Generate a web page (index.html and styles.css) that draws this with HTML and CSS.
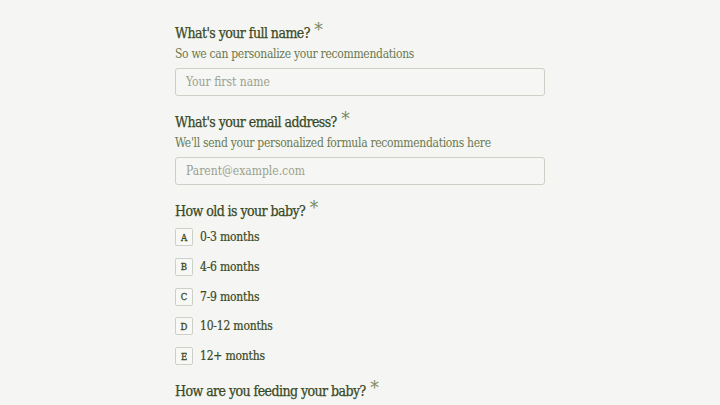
FILE: index.html
```html
<!DOCTYPE html>
<html lang="en">
<head>
<meta charset="utf-8">
<link rel="stylesheet" href="styles.css">
</head>
<body>
<form class="form">
  <div class="field">
    <label class="label">What's your full name? <span class="req">*</span></label>
    <p class="desc">So we can personalize your recommendations</p>
    <input class="input" type="text" placeholder="Your first name">
  </div>
  <div class="field">
    <label class="label">What's your email address? <span class="req">*</span></label>
    <p class="desc">We'll send your personalized formula recommendations here</p>
    <input class="input" type="email" placeholder="Parent@example.com">
  </div>
  <div class="field">
    <label class="label">How old is your baby? <span class="req">*</span></label>
    <ul class="options">
      <li class="option"><span class="key">A</span><span class="opt-text">0-3 months</span></li>
      <li class="option"><span class="key">B</span><span class="opt-text">4-6 months</span></li>
      <li class="option"><span class="key">C</span><span class="opt-text">7-9 months</span></li>
      <li class="option"><span class="key">D</span><span class="opt-text">10-12 months</span></li>
      <li class="option"><span class="key">E</span><span class="opt-text">12+ months</span></li>
    </ul>
  </div>
  <div class="field">
    <label class="label">How are you feeding your baby? <span class="req">*</span></label>
  </div>
</form>
</body>
</html>
```

FILE: styles.css
```css
html, body {
  margin: 0;
  padding: 0;
  background: #f5f5f3;
}
body {
  font-family: "DejaVu Serif Condensed", "DejaVu Serif", "Liberation Serif", serif;
  color: #3a4a1f;
}
.form {
  width: 370px;
  margin: 0 0 0 175px;
  padding-top: 20px;
  display: flex;
  flex-direction: column;
  gap: 13px;
}
.field {
  display: flex;
  flex-direction: column;
}
.label {
  font-size: 14px;
  line-height: 22px;
  height: 22px;
  letter-spacing: -0.55px;
  color: #3a4a1f;
  -webkit-text-stroke: 0.25px #3a4a1f;
}
.req {
  font-size: 19px;
  letter-spacing: 0;
  color: #7b8a5e;
  -webkit-text-stroke: 0;
  position: relative;
  top: -2px;
  margin-left: 1px;
}
.desc {
  margin: 2px 0 4px;
  font-size: 12px;
  line-height: 20px;
  letter-spacing: -0.3px;
  color: #6a7a50;
  white-space: nowrap;
}
.input {
  box-sizing: border-box;
  width: 370px;
  height: 28px;
  margin: 0;
  padding: 0 10px;
  border: 1px solid #cdd0c7;
  border-radius: 3px;
  background: #f6f6f4;
  font-family: inherit;
  font-size: 12px;
  color: #3a4a1f;
  outline: none;
}
.input::placeholder {
  color: #9aa18c;
}
.options {
  list-style: none;
  margin: 8px 0 0;
  padding: 0;
  display: flex;
  flex-direction: column;
  gap: 11.75px;
}
.option {
  display: flex;
  align-items: center;
  gap: 7px;
  height: 18px;
}
.key {
  box-sizing: border-box;
  width: 18px;
  height: 18px;
  border: 1px solid #cdd0c7;
  border-radius: 2px;
  background: #f8f8f6;
  display: flex;
  align-items: center;
  justify-content: center;
  font-size: 9.5px;
  color: #3a4a1f;
  -webkit-text-stroke: 0.3px #3a4a1f;
}
.opt-text {
  font-size: 12px;
  letter-spacing: -0.2px;
  color: #3a4a1f;
  -webkit-text-stroke: 0.2px #3a4a1f;
}
```
